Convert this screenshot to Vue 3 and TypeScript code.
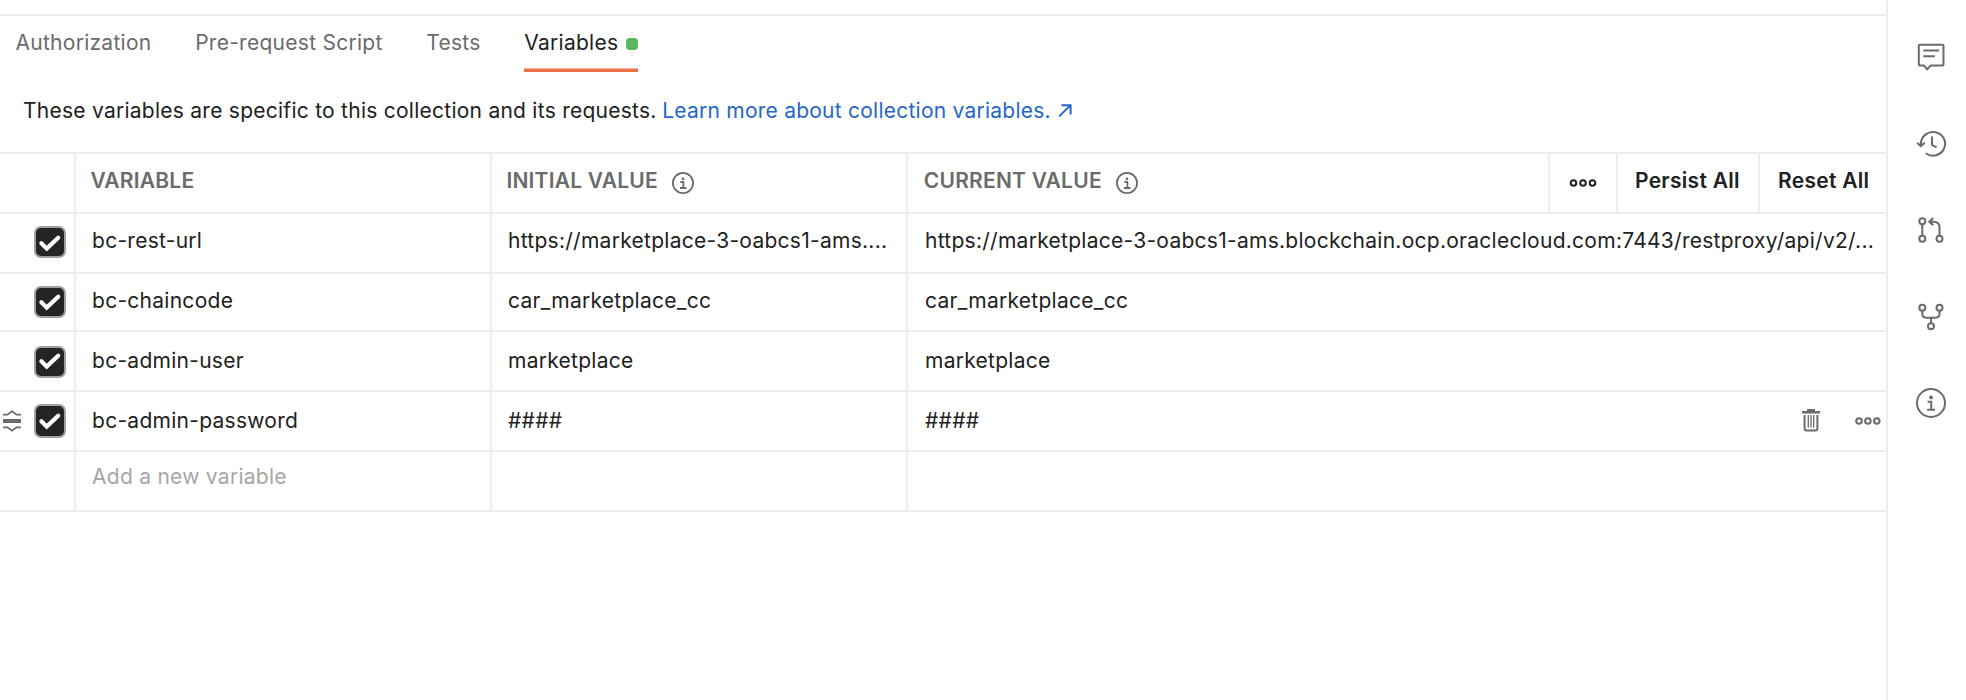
<script setup lang="ts">
interface Tab {
  label: string
  active?: boolean
}

interface Variable {
  name: string
  initial: string
  current: string
  size: 'normal' | 'short' | 'offset'
  hovered?: boolean
}

const tabs: Tab[] = [
  { label: 'Authorization' },
  { label: 'Pre-request Script' },
  { label: 'Tests' },
  { label: 'Variables', active: true },
]

const variables: Variable[] = [
  {
    name: 'bc-rest-url',
    initial: 'https://marketplace-3-oabcs1-ams....',
    current:
      'https://marketplace-3-oabcs1-ams.blockchain.ocp.oraclecloud.com:7443/restproxy/api/v2/...',
    size: 'normal',
  },
  {
    name: 'bc-chaincode',
    initial: 'car_marketplace_cc',
    current: 'car_marketplace_cc',
    size: 'short',
  },
  { name: 'bc-admin-user', initial: 'marketplace', current: 'marketplace', size: 'offset' },
  { name: 'bc-admin-password', initial: '####', current: '####', size: 'offset', hovered: true },
]
</script>

<template>
  <div class="page">
    <main class="main">
      <nav class="tabs">
        <a v-for="tab in tabs" :key="tab.label" class="tab" :class="{ active: tab.active }">
          <span>{{ tab.label }}</span>
          <i v-if="tab.active" class="dot"></i>
        </a>
      </nav>

      <p class="intro">
        <span>These variables are specific to this collection and its requests.</span>
        <a class="link">Learn more about collection variables.</a>
        <svg class="arrow" width="14" height="14" viewBox="0 0 14 14">
          <path d="M1.2 12.4 12 1.6M3.4 1.2h9.2v9.4" />
        </svg>
      </p>

      <section class="table">
        <div class="row head">
          <div class="cell check"></div>
          <div class="cell"><span class="title">VARIABLE</span></div>
          <div class="cell">
            <span class="title">INITIAL VALUE</span>
            <svg class="info" width="22" height="22" viewBox="0 0 22 22">
              <circle cx="11" cy="11" r="10.1" />
              <path d="M8.4 10h3v6M8 16h6.4" />
              <circle class="fill" cx="11" cy="6.9" r="1.3" />
            </svg>
          </div>
          <div class="cell current">
            <span class="title">CURRENT VALUE</span>
            <svg class="info" width="22" height="22" viewBox="0 0 22 22">
              <circle cx="11" cy="11" r="10.1" />
              <path d="M8.4 10h3v6M8 16h6.4" />
              <circle class="fill" cx="11" cy="6.9" r="1.3" />
            </svg>
            <div class="actions">
              <button class="action more">
                <svg width="28" height="10" viewBox="0 0 28 10">
                  <circle cx="4.5" cy="5" r="2.8" />
                  <circle cx="14" cy="5" r="2.8" />
                  <circle cx="23.5" cy="5" r="2.8" />
                </svg>
              </button>
              <button class="action persist">Persist All</button>
              <button class="action reset">Reset All</button>
            </div>
          </div>
        </div>

        <div v-for="item in variables" :key="item.name" class="row" :class="[item.size, { hovered: item.hovered }]">
          <div class="cell check">
            <svg v-if="item.hovered" class="drag" width="18" height="22" viewBox="0 0 18 22">
              <path d="M0 4.6h4.4L9 1.2l4.6 3.4H18M0 17.4h4.4L9 20.8l4.6-3.4H18" />
              <rect y="9" width="18" height="4" />
            </svg>
            <span class="box">
              <svg width="24" height="20" viewBox="0 0 24 20">
                <path d="M3.4 10.2 8.7 15.6 20.2 4.8" />
              </svg>
            </span>
          </div>
          <div class="cell">{{ item.name }}</div>
          <div class="cell">{{ item.initial }}</div>
          <div class="cell current">
            {{ item.current }}
            <div v-if="item.hovered" class="tools">
              <svg width="20" height="24" viewBox="0 0 20 24">
                <path class="solid" d="M6 1h8v2h5v2.4H1V3h5z" />
                <path d="M3.6 7v13.4a2 2 0 0 0 2 2h8.8a2 2 0 0 0 2-2V7" />
                <path class="slats" d="M7.3 7v12.5M10 7v12.5M12.7 7v12.5" />
              </svg>
              <svg width="26" height="10" viewBox="0 0 26 10">
                <circle cx="4" cy="5" r="2.8" />
                <circle cx="12.9" cy="5" r="2.8" />
                <circle cx="21.8" cy="5" r="2.8" />
              </svg>
            </div>
          </div>
        </div>

        <div class="row add">
          <div class="cell check"></div>
          <div class="cell">Add a new variable</div>
          <div class="cell"></div>
          <div class="cell current"></div>
        </div>
      </section>
    </main>

    <aside class="sidebar">
      <svg viewBox="0 0 32 32">
        <path d="M4.5 3.8h23a1 1 0 0 1 1 1V23.500a1 1 0 0 1-1 1H15.600L12.200 28.200 8.900 24.500H4.800a1 1 0 0 1-1-1V4.800a1 1 0 0 1 .7-1z" />
        <path d="M8.300 9.500h15.800M8.300 15.200h11.600" />
      </svg>
      <svg viewBox="0 0 32 32">
        <path d="M5.900 18V15.800A12.100 11.800 0 1 1 10.700 25.200" />
        <path d="M2.200 14.800 5.900 18.200 9.700 14.800M17 8.600V17L21.600 19.300" />
      </svg>
      <svg viewBox="0 0 32 32">
        <circle cx="7.300" cy="7.300" r="3" />
        <circle cx="7.300" cy="24.800" r="3" />
        <circle cx="24.500" cy="24.800" r="3" />
        <path d="M7.300 10.300V21.800M24.500 21.800V13.500Q24.500 7.700 18.500 7.700H14.300M18.300 4 14.300 7.700 18.300 11.300" />
      </svg>
      <svg viewBox="0 0 32 32">
        <circle cx="7.300" cy="6.800" r="3" />
        <circle cx="24.500" cy="6.800" r="3" />
        <circle cx="16" cy="25.200" r="3" />
        <path d="M7.300 9.800V12.800Q7.300 16.700 11.200 16.700H20.600Q24.500 16.700 24.500 12.800V9.800M16 16.700V22.200" />
      </svg>
      <svg viewBox="0 0 32 32">
        <circle cx="16" cy="16" r="14" />
        <path d="M12.600 14.800H16.200V22.700M12.200 22.700H20" />
        <circle class="fill" cx="16" cy="10.400" r="1.900" />
      </svg>
    </aside>
  </div>
</template>

<style>
body {
  margin: 0;
  background: #fff;
}
</style>

<style scoped>
.page {
  display: flex;
  width: 1966px;
  height: 700px;
  overflow: hidden;
  background: #fff;
  color: #212121;
  font: 400 21px/26px Inter, 'Liberation Sans', sans-serif;
  letter-spacing: 0.27px;
}

svg {
  display: block;
  flex: none;
  fill: none;
  stroke: #6b6b6b;
  stroke-width: 2;
}

.main {
  width: 1886px;
  box-sizing: border-box;
  padding-top: 14px;
}

.tabs {
  display: flex;
  gap: 43.7px;
  height: 58px;
  box-sizing: border-box;
  padding-left: 15.5px;
  border-top: 2px solid #ededed;
}

.tab {
  display: flex;
  align-items: flex-start;
  box-sizing: border-box;
  height: 56px;
  padding-top: 14px;
  color: #6b6b6b;
  white-space: nowrap;
}

.tab.active {
  gap: 8px;
  color: #212121;
  background: linear-gradient(#f6b49d 1px, #eb7249 1px) bottom / 100% 4px no-repeat;
}

.dot {
  width: 12px;
  height: 12px;
  margin-top: 8px;
  border-radius: 4px;
  background: #58b85e;
}

.intro {
  display: flex;
  height: 54px;
  margin: 0;
  padding: 26px 0 0 23px;
  letter-spacing: 0.255px;
  white-space: nowrap;
}

.link {
  margin-left: 5.5px;
  letter-spacing: 0.24px;
  color: #2566cc;
}

.arrow {
  margin: 6px 0 0 7.5px;
  stroke: #2566cc;
}

.table {
  border-top: 2px solid #ededed;
}

.row {
  display: grid;
  grid-template-columns: 76px 416px 416px 978px;
  height: 60px;
  box-sizing: border-box;
  border-bottom: 2px solid #ededed;
}

.cell {
  display: flex;
  align-items: flex-start;
  box-sizing: border-box;
  padding: 14px 0 0 16px;
  border-right: 2px solid #ededed;
  white-space: nowrap;
}

.cell.current {
  padding-left: 17px;
  border-right: 0;
}

.head .cell {
  padding-left: 14.4px;
  color: #6b6b6b;
  font-weight: 600;
  letter-spacing: 0.22px;
}

.head .cell.current {
  padding-left: 15.8px;
}

.info {
  margin: 4px 0 0 14px;
  stroke-width: 1.8;
}

.fill {
  fill: #6b6b6b;
  stroke: none;
}

.actions {
  display: flex;
  height: 58px;
  margin: -14px 0 0 auto;
}

.action {
  display: flex;
  box-sizing: border-box;
  height: 58px;
  margin: 0;
  padding: 14px 0 0 17px;
  border: 0;
  border-left: 2px solid #ededed;
  background: none;
  color: #212121;
  font: inherit;
  font-weight: 600;
  letter-spacing: 0.28px;
}

.action.more {
  width: 68px;
  padding: 24px 0 0 19px;
}

.more svg {
  stroke: #212121;
}

.persist {
  width: 142px;
}

.action.reset {
  width: 128px;
  padding-left: 18px;
}

.row.short {
  height: 58px;
}

.row.offset .cell {
  padding-top: 16px;
}

.row.add .cell {
  padding-top: 12px;
  color: #a6a6a6;
}

.row .cell.check {
  justify-content: flex-end;
  padding: 12px 8px 0 0;
}

.row.offset .cell.check {
  padding-top: 14px;
}

.row.hovered .cell.check {
  justify-content: space-between;
  padding: 12px 8px 0 3px;
}

.drag {
  margin-top: 6px;
}

.drag path {
  stroke-width: 1.7;
}

.drag rect {
  fill: #6b6b6b;
  stroke: none;
}

.box {
  display: flex;
  justify-content: center;
  box-sizing: border-box;
  width: 32px;
  height: 32px;
  padding-top: 5px;
  border: 2px solid #a0a0a0;
  border-radius: 7px;
  background: #242424;
}

.short .box {
  padding-top: 4px;
}

.offset .box {
  padding-top: 3px;
}

.hovered .box {
  height: 34px;
  padding-top: 5px;
}

.box svg {
  margin-left: -1px;
  stroke: #fff;
  stroke-width: 4.2;
  stroke-linecap: round;
}

.tools {
  display: flex;
  gap: 34px;
  margin: 0 5px 0 auto;
}

.tools svg:last-child {
  margin-top: 8px;
}

.tools .solid {
  fill: #6b6b6b;
  stroke: none;
}

.tools .slats {
  stroke-width: 1.3;
}

.sidebar {
  display: flex;
  flex-direction: column;
  gap: 54.5px;
  box-sizing: border-box;
  width: 80px;
  padding: 41px 0 0 27px;
  border-left: 2px solid #ededed;
}

.sidebar svg {
  width: 32px;
  height: 32px;
}
</style>
